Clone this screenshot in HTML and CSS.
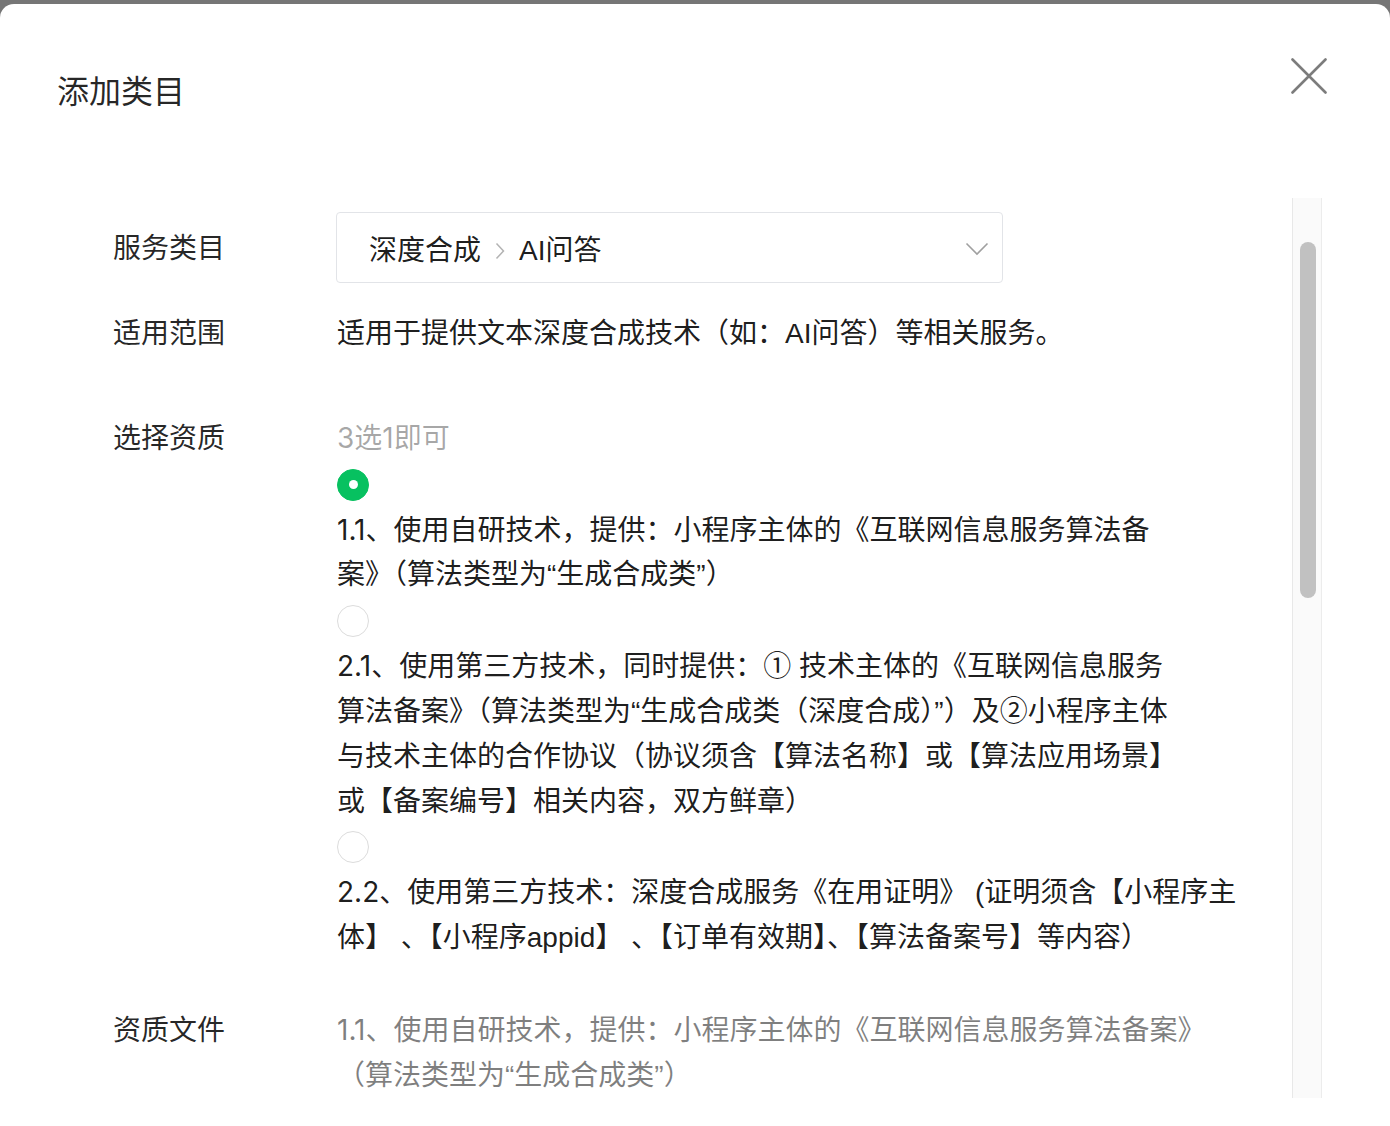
FILE: index.html
```html
<!DOCTYPE html>
<html lang="zh-CN">
<head>
<meta charset="utf-8">
<title>添加类目</title>
<link rel="stylesheet" href="styles.css">
</head>
<body>
<div class="dialog">
  <div class="header">
    <h1 class="title">添加类目</h1>
    <button class="close" aria-label="关闭">
      <svg width="36" height="36" viewBox="0 0 36 36"><path d="M1.5 1.5L34.5 34.5M34.5 1.5L1.5 34.5" stroke="#7c7c7c" stroke-width="2.6" stroke-linecap="round" fill="none"/></svg>
    </button>
  </div>
  <div class="body">
    <div class="scroll">
      <div class="row row-center">
        <div class="label label-center">服务类目</div>
        <div class="select">
          <span>深度合成</span>
          <svg class="crumb" width="10" height="18" viewBox="0 0 10 18"><path d="M1.5 1.5L8.5 9L1.5 16.5" stroke="#b3b3b3" stroke-width="1.5" fill="none"/></svg>
          <span>AI问答</span>
          <svg class="arrow" width="24" height="14" viewBox="0 0 24 14"><path d="M1.5 1.5L12 12L22.5 1.5" stroke="#a0a0a0" stroke-width="1.6" fill="none"/></svg>
        </div>
      </div>
      <div class="row row-scope">
        <div class="label">适用范围</div>
        <div class="content">适用于提供文本深度合成技术（如：AI问答）等相关服务。</div>
      </div>
      <div class="row row-qual">
        <div class="label">选择资质</div>
        <div class="content">
          <div class="hint"><span class="num">3</span>选<span class="num">1</span>即可</div>
          <div class="option">
            <span class="radio checked"></span>
            <div class="option-text"><span class="num">1.1</span>、使用自研技术，提供：小程序主体的《互联网信息服务算法备<br>案》（算法类型为“生成合成类”）</div>
          </div>
          <div class="option">
            <span class="radio"></span>
            <div class="option-text"><span class="num">2.1</span>、使用第三方技术，同时提供：① 技术主体的《互联网信息服务<br>算法备案》（算法类型为“生成合成类（深度合成）”）及②小程序主体<br>与技术主体的合作协议（协议须含【算法名称】或【算法应用场景】<br>或【备案编号】相关内容，双方鲜章）</div>
          </div>
          <div class="option">
            <span class="radio"></span>
            <div class="option-text"><span class="num">2.2</span>、使用第三方技术：深度合成服务《在用证明》 (证明须含【小程序主<br>体】 、【小程序appid】 、【订单有效期】、【算法备案号】等内容）</div>
          </div>
        </div>
      </div>
      <div class="row row-file">
        <div class="label">资质文件</div>
        <div class="content muted"><span class="num">1.1</span>、使用自研技术，提供：小程序主体的《互联网信息服务算法备案》<br>（算法类型为“生成合成类”）</div>
      </div>
    </div>
    <div class="track"><div class="thumb"></div></div>
  </div>
</div>
</body>
</html>
```
FILE: styles.css
```css
html, body {
  margin: 0;
  padding: 0;
  height: 1126px;
  overflow: hidden;
  background: #767676;
}

body {
  font-family: "Liberation Sans", "Noto Sans CJK SC", sans-serif;
  color: rgba(0, 0, 0, 0.9);
}

.dialog {
  margin-top: 4px;
  height: 1122px;
  background: #ffffff;
  border-radius: 14px 14px 0 0;
  display: flex;
  flex-direction: column;
}

.header {
  height: 194px;
  box-sizing: border-box;
  padding: 54px 63px 0 57px;
  display: flex;
  justify-content: space-between;
  align-items: flex-start;
}

.title {
  margin: 12px 0 0 0;
  font-size: 32px;
  font-weight: 400;
  line-height: 44.8px;
  color: rgba(0, 0, 0, 0.85);
}

.close {
  border: 0;
  padding: 0;
  background: none;
  width: 36px;
  height: 36px;
  display: block;
}

.close svg { display: block; }

.body {
  height: 900px;
  display: flex;
}

.scroll {
  flex: 1;
  overflow: hidden;
  padding: 14px 0 0 113px;
  box-sizing: border-box;
}

.track {
  width: 30px;
  box-sizing: border-box;
  margin-right: 68px;
  background: #fafafa;
  border-left: 1px solid #e8e8e8;
  border-right: 1px solid #ececec;
  padding: 44px 0 0 7px;
}

.thumb {
  width: 16px;
  height: 356px;
  background: #c1c1c1;
  border-radius: 8px;
}

.row {
  display: flex;
  font-size: 28px;
  line-height: 44.8px;
}

.row-center { align-items: center; }
.row-scope { margin-top: 29px; }
.row-qual { margin-top: 60px; }
.row-file { margin-top: 48px; }

.label {
  width: 224px;
  flex-shrink: 0;
  color: rgba(0, 0, 0, 0.85);
}

.label-center {
  padding-top: 3px;
}

.content {
  flex: 1;
  min-width: 0;
}

.num {
  font-family: "Inter", "Liberation Sans", sans-serif;
  line-height: 1;
}

.select {
  width: 667px;
  height: 71px;
  box-sizing: border-box;
  margin-left: -1px;
  border: 1px solid #e2e4e8;
  border-radius: 4px;
  padding: 7px 13px 0 32px;
  display: flex;
  align-items: center;
}

.crumb {
  margin: 0 14px;
  flex-shrink: 0;
}

.arrow {
  margin-left: auto;
  margin-top: -5px;
}

.hint {
  color: rgba(0, 0, 0, 0.35);
}

.option {
  display: flex;
  flex-direction: column;
  align-items: flex-start;
}

.radio {
  margin-top: 7px;
  width: 32px;
  height: 32px;
  box-sizing: border-box;
  border-radius: 50%;
  border: 1.5px solid #dcdcdc;
  background: #fff;
  display: flex;
  align-items: center;
  justify-content: center;
}

.radio.checked {
  background: #07c160;
  border-color: #07c160;
}

.radio.checked::after {
  content: "";
  width: 9px;
  height: 9px;
  border-radius: 50%;
  background: #fff;
}

.option-text {
  margin-top: 8px;
}

.muted {
  color: rgba(0, 0, 0, 0.5);
}
```
